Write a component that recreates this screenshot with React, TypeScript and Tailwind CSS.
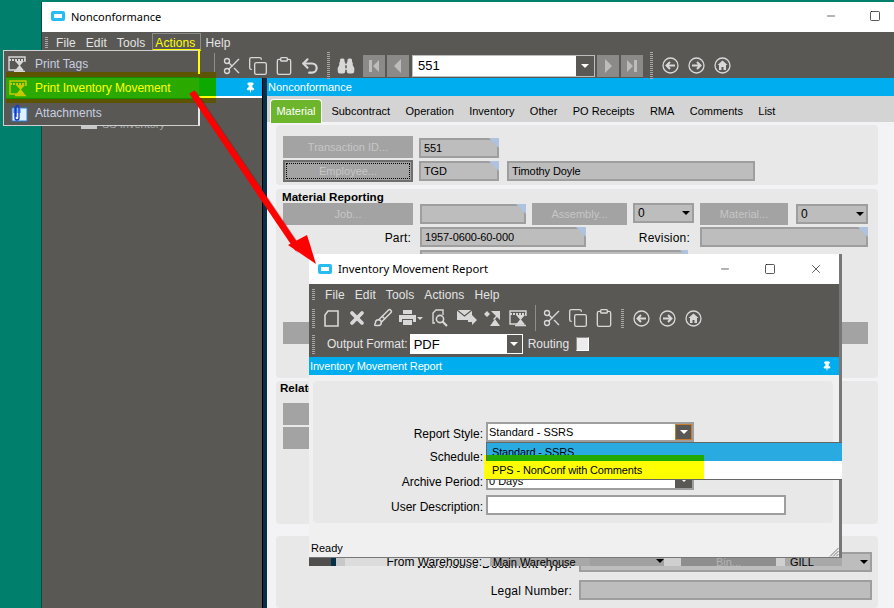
import React from 'react';
import { Binoculars, Brush, Clipboard, Copy, Minus, Pin, Scissors, Square, Undo2, X } from 'lucide-react';

const ink = '#d8d8d8';

function Grip({ h = 'h-[28px]' }: { h?: string }) {
  return <div className={`w-[3px] shrink-0 bg-[repeating-linear-gradient(to_bottom,#a8a8a8_0_1px,transparent_1px_2px)] ${h}`} />;
}

function HourglassIcon({ c = ink }: { c?: string }) {
  return (
    <svg width="20" height="17" viewBox="0 0 20 17" fill="none" className="shrink-0">
      <path d="M15 14H1V1h16v5" stroke={c} strokeWidth="1.4" />
      <path d="M1 4h16" stroke={c} strokeWidth="2" strokeDasharray="2 1" />
      <path d="M7 5h9l-4 4.5 4 5H7l4-5z" fill={c} />
      <path d="M6 15.5h11" stroke={c} strokeWidth="1.5" />
    </svg>
  );
}

function CircleGlyph({ dir }: { dir: 'left' | 'right' | 'home' }) {
  return (
    <svg width="17" height="17" viewBox="0 0 17 17" fill="none" className="shrink-0">
      <circle cx="8.5" cy="8.5" r="7.5" stroke={ink} strokeWidth="1.3" />
      {dir === 'left' && <path d="M13 8.5H5M8 5L4.5 8.5 8 12" stroke={ink} strokeWidth="2" />}
      {dir === 'right' && <path d="M4 8.5h8M9 5l3.5 3.5L9 12" stroke={ink} strokeWidth="2" />}
      {dir === 'home' && <path d="M8.5 3.5L13.5 8H12v5H9.5v-3h-2v3H5V8H3.5z" fill={ink} />}
    </svg>
  );
}

function NavButton({ kind }: { kind: 'first' | 'prev' | 'next' | 'last' }) {
  return (
    <div className="w-[22px] h-[22px] shrink-0 bg-[#8b8a88] flex items-center justify-center">
      <svg width="14" height="14" viewBox="0 0 14 14" fill="#bdbcba">
        {kind === 'first' && <path d="M2 1h3v12H2zM12 1v12L6 7z" />}
        {kind === 'prev' && <path d="M10 0v14L3 7z" />}
        {kind === 'next' && <path d="M4 0v14l7-7z" />}
        {kind === 'last' && <path d="M12 1H9v12h3zM2 1v12l6-6z" />}
      </svg>
    </div>
  );
}

function CaretBox({ className = '' }: { className?: string }) {
  return (
    <div className={`bg-[#595855] flex items-center justify-center shrink-0 ${className}`}>
      <div className="w-0 h-0 border-x-[4px] border-x-transparent border-t-[4px] border-t-white" />
    </div>
  );
}

function Field({ className = '', text = '', flag = false, children }: { className?: string; text?: string; flag?: boolean; children?: React.ReactNode }) {
  return (
    <div className={`relative shrink-0 h-[20px] bg-[#bdbdbd] border-2 border-[#9e9e9e] pl-[3px] flex justify-between text-black ${className || ''} items-center`}>
      <span className="whitespace-nowrap tracking-[-0.1px]">{text}</span>
      {children}
      {flag && <div className="absolute -top-[2px] -right-[2px] w-0 h-0 border-l-[10px] border-l-transparent border-t-[10px] border-t-[#adc3e0]" />}
    </div>
  );
}

function GraySelect({ className = '', text }: { className?: string; text: string }) {
  return (
    <Field className={className} text={text}>
      <div className="mr-[2px] w-0 h-0 border-x-[4px] border-x-transparent border-t-[4px] border-t-black" />
    </Field>
  );
}

function FormButton({ className = '', text = '' }: { className?: string; text?: string }) {
  return <div className={`shrink-0 h-[22px] bg-[#a3a3a3] text-[#c6c6c6] flex items-center justify-center whitespace-nowrap ${className}`}>{text}</div>;
}

function Group({ className = '', children }: { className?: string; children?: React.ReactNode }) {
  return <div className={`ml-[9px] w-[602px] bg-[#e8e8e8] rounded-[4px] pl-[7px] ${className}`}>{children}</div>;
}

function MainForm() {
  return (
    <div className="flex-1 flex flex-col bg-[#f3f3f5] overflow-hidden">
      <div className="h-[18px] shrink-0 bg-[#00adee] text-white pl-[1px] flex items-center">Nonconformance</div>
      <div className="h-[26px] shrink-0 bg-[#d4d4d4] flex items-end pl-[3px] gap-[15.4px] text-black">
        <div className="w-[52px] h-[24px] -mb-px bg-[#6cb52d] border border-b-0 border-white rounded-t-[4px] text-white flex items-center justify-center mr-[-6px]">Material</div>
        <span className="pb-[5px]">Subcontract</span>
        <span className="pb-[5px]">Operation</span>
        <span className="pb-[5px]">Inventory</span>
        <span className="pb-[5px]">Other</span>
        <span className="pb-[5px]">PO Receipts</span>
        <span className="pb-[5px]">RMA</span>
        <span className="pb-[5px]">Comments</span>
        <span className="pb-[5px]">List</span>
      </div>
      <Group className="mt-[3px] h-[60px] shrink-0 pt-[11px]">
        <div className="flex items-end gap-[6px]">
          <FormButton className="w-[130px]" text="Transaction ID..." />
          <Field className="w-[80px]" text="551" flag />
        </div>
        <div className="flex items-center gap-[6px] mt-[2px]">
          <div className="w-[130px] h-[22px] shrink-0 bg-[#a3a3a3] border-2 border-[#6e6e6e] p-px">
            <div className="w-full h-full border border-dotted border-black text-[#c6c6c6] flex items-center justify-center">Employee...</div>
          </div>
          <Field className="w-[80px]" text="TGD" flag />
          <Field className="w-[248px] ml-[2px]" text="Timothy Doyle" />
        </div>
      </Group>
      <Group className="mt-[4px] h-[189px] shrink-0 pt-[1px] flex flex-col">
        <div className="font-bold text-black h-[13px] leading-[13px] text-[11.6px] -ml-px">Material Reporting</div>
        <div className="flex items-start h-[23px]">
          <FormButton className="w-[130px]" text="Job..." />
          <Field className="w-[106px] ml-[7px] mt-px" flag />
          <FormButton className="w-[95px] ml-[6px]" text="Assembly..." />
          <GraySelect className="w-[61px] ml-[6px] text-[12px]" text="0" />
          <FormButton className="w-[88px] ml-[6px]" text="Material..." />
          <GraySelect className="w-[72px] ml-[8px] mt-px text-[12px]" text="0" />
        </div>
        <div className="flex items-center h-[20px] mt-px">
          <span className="w-[128px] text-right text-black shrink-0 text-[12px] tracking-[0.2px] pt-[2px]">Part:</span>
          <Field className="w-[166px] ml-[9px]" text="1957-0600-60-000" flag />
          <span className="w-[104px] text-right text-black shrink-0 text-[12px] tracking-[0.2px] pt-[2px]">Revision:</span>
          <Field className="w-[168px] ml-[10px]" flag />
        </div>
        <div className="relative w-[268px] h-[20px] ml-[137px] mt-[3px] bg-[#bdbdbd] border-2 border-[#9e9e9e] pl-[3px] text-black whitespace-nowrap leading-[12px]">
          SHU600, Sensor / Heating Plate Assembly
          <div className="absolute -top-[2px] -right-[2px] w-0 h-0 border-l-[8px] border-l-transparent border-t-[8px] border-t-[#adc3e0]" />
        </div>
        <div className="flex justify-between mt-[52px] pr-[10px]">
          <FormButton className="w-[130px]" />
          <FormButton className="w-[130px]" />
        </div>
      </Group>
      <Group className="mt-[3px] h-[143px] shrink-0 pt-[1px]">
        <div className="font-bold text-black h-[21px] text-[11.6px] -ml-[3px]">Related</div>
        <FormButton className="w-[130px]" />
        <FormButton className="w-[130px] mt-[2px]" />
      </Group>
      <Group className="mt-[12px] flex-1 pt-[16px]">
        <div className="flex justify-end items-end h-[20px] pr-[6px] gap-[7px] text-black">
          <span className="-translate-y-[2px] text-[12px] tracking-[0.2px]">Warehouse Document Type:</span>
          <GraySelect className="w-[293px]" text="" />
        </div>
        <div className="flex justify-end items-center h-[20px] mt-[8px] pr-[6px] gap-[7px] text-black">
          <span className="text-[12px] tracking-[0.2px] pt-[2px]">Legal Number:</span>
          <Field className="w-[293px]" />
        </div>
      </Group>
    </div>
  );
}

function MainWindow() {
  return (
    <div className="absolute left-[41px] top-[2px] right-0 bottom-0 flex flex-col border-l border-[#004d45] bg-white">
      <div className="h-[30px] shrink-0 flex items-center text-black font-['Noto_Sans',sans-serif] text-[11px] relative pb-[2px]">
        <div className="ml-[9px] w-[14px] h-[10px] rounded-[2px] border-[3px] border-[#29bdef] bg-white" />
        <span className="ml-[6px]">Nonconformance</span>
        <div className="ml-auto flex items-center gap-[32px] mr-[13px]">
          <Minus size={12} strokeWidth={1.2} color="#000" />
          <Square size={12} strokeWidth={1.3} color="#000" />
        </div>
      </div>
      <div className="h-[46px] shrink-0 bg-[#595855] text-[#e4e4e4] flex flex-col">
        <div className="h-[21px] flex items-center pl-[3px]">
          <Grip h="h-[11px]" />
          <div className="ml-[8px] flex gap-[10px] text-[12px] tracking-[0.1px]">
            <span>File</span>
            <span>Edit</span>
            <span>Tools</span>
            <span className="text-[#ffff00]">Actions</span>
            <span>Help</span>
          </div>
        </div>
        <div className="h-[25px] flex items-center pl-[172px] relative">
          <div className="w-px h-[25px] bg-[#8f8e8c] shrink-0" />
          <div className="flex items-center gap-[6px] ml-[7px]">
            <Scissors size={20} color={ink} strokeWidth={1.6} />
            <Copy size={20} color={ink} strokeWidth={1.6} />
            <Clipboard size={20} color={ink} strokeWidth={1.6} />
            <Undo2 size={20} color={ink} strokeWidth={2.6} />
          </div>
          <div className="ml-[7px]"><Grip /></div>
          <Binoculars size={18} color={ink} fill={ink} className="ml-[7px] shrink-0" />
          <div className="flex gap-[2px] ml-[8px]">
            <NavButton kind="first" />
            <NavButton kind="prev" />
          </div>
          <div className="ml-[3px] w-[183px] h-[22px] shrink-0 border border-[#bdbdbd] bg-white flex items-center justify-between text-black text-[13px] pl-[5px]">
            <span>551</span>
            <CaretBox className="w-[18px] h-full" />
          </div>
          <div className="flex gap-[2px] ml-[2px]">
            <NavButton kind="next" />
            <NavButton kind="last" />
          </div>
          <div className="ml-[7px]"><Grip /></div>
          <div className="flex gap-[9px] ml-[9px]">
            <CircleGlyph dir="left" />
            <CircleGlyph dir="right" />
            <CircleGlyph dir="home" />
          </div>
        </div>
      </div>
      <div className="flex-1 flex min-h-0">
        <div className="w-[220px] shrink-0 bg-[#595855] flex flex-col">
          <div className="h-[18px] bg-[#00adee] flex items-center justify-end pr-[6px]">
            <Pin size={11} color="#fff" fill="#fff" />
          </div>
          <div className="h-[2px] bg-white" />
          <div className="mt-[21px] ml-[39px] flex items-center text-[#a8a8a8] gap-[5px]">
            <div className="w-[16px] h-[8px] bg-[#c8c8c8]" />
            <span>SS Inventory</span>
          </div>
        </div>
        <div className="w-[5px] shrink-0 bg-[#06304a] border-l border-black" />
        <MainForm />
      </div>
    </div>
  );
}

function ActionsMenu() {
  return (
    <>
      <div className="absolute left-[152px] top-[33px] w-[49px] h-[18px] border border-[#8c8c8c] border-b-[2px] border-b-[#ffff00]" />
      <div className="absolute left-[3px] top-[50px] w-[197px] h-[76px] bg-[#595855] border border-[#cfcfcf] border-r-2 border-r-[#e8e8e8] flex flex-col text-[12px]">
        <div className="h-[25px] flex items-center pl-[4px] pt-px gap-[7px] text-[#c9cfe0]">
          <HourglassIcon />
          <span>Print Tags</span>
        </div>
        <div className="h-[22px] mt-px ml-[2px] -mr-px bg-[#2aaa00] border-y border-[#0f8f00] flex items-center pl-[3px] gap-[6px] text-[#ffff00] relative shadow-[0_-5px_0_#5c5400,0_4px_0_#5c5400]">
          <HourglassIcon c="#c8c800" />
          <span className="tracking-[-0.05px]">Print Inventory Movement</span>
        </div>
        <div className="flex-1 flex items-center pl-[5px] gap-[7px] text-[#c9cfe0] pt-[2px]">
          <svg width="19" height="18" viewBox="0 0 19 18" fill="none" className="shrink-0">
            <rect x="3" y="4" width="15" height="13" fill="#dff0ff" stroke="#2f7fd0" />
            <path d="M4 14V4h8v5H4" fill="#7ab8f0" />
            <path d="M6 3v11a2 2 0 004 0V3a1.5 1.5 0 00-3 0v10" stroke="#1438c8" strokeWidth="1.3" />
          </svg>
          <span>Attachments</span>
        </div>
      </div>
      <div className="absolute left-[199px] top-[72px] w-[17px] h-[31px] bg-[#5c5400]" />
      <div className="absolute left-[199px] top-[78px] w-[17px] h-[20px] bg-[#0aaa00] border-b-[2px] border-b-[#ffff00]" />
      <div className="absolute left-[198px] top-[50px] w-[2px] h-[24px] bg-[#ffff00]" />
    </>
  );
}

function ReportRow({ label, className = '', children }: { label: string; className?: string; children?: React.ReactNode }) {
  return (
    <div className={`flex items-center gap-[3px] ${className}`}>
      <span className="w-[170px] shrink-0 text-right text-black text-[12px] pt-[3px]">{label}</span>
      {children}
    </div>
  );
}

function InventoryDialog() {
  return (
    <div className="absolute left-[309px] top-[254px] w-[533px] h-[304px] flex flex-col bg-[#f0f0f0] border-r-[3px] border-b-[1px] border-[#777]">
      <div className="h-[30px] shrink-0 bg-white flex items-center text-black font-['Noto_Sans',sans-serif] text-[11.3px] pb-px">
        <div className="ml-[9px] w-[14px] h-[10px] rounded-[2px] border-[3px] border-[#29bdef] bg-white" />
        <span className="ml-[6px]">Inventory Movement Report</span>
        <div className="ml-auto flex items-center gap-[33px] mr-[16px]">
          <Minus size={12} strokeWidth={1.2} color="#000" />
          <Square size={12} strokeWidth={1.3} color="#000" />
          <X size={14} strokeWidth={1.1} color="#000" />
        </div>
      </div>
      <div className="h-[73px] shrink-0 bg-[#595855] text-[#e4e4e4] flex flex-col pl-[3px] text-[12px]">
        <div className="h-[21px] flex items-center">
          <Grip h="h-[11px]" />
          <div className="ml-[10px] flex gap-[10px] tracking-[0.1px]">
            <span>File</span>
            <span>Edit</span>
            <span>Tools</span>
            <span>Actions</span>
            <span>Help</span>
          </div>
        </div>
        <div className="h-[26px] flex items-center">
          <Grip h="h-[19px]" />
          <div className="ml-[6px] flex items-center gap-[6px]">
            <svg width="20" height="20" viewBox="0 0 20 20" fill="none" className="shrink-0">
              <path d="M7 3h10v15H4V7z" stroke={ink} strokeWidth="1.6" />
            </svg>
            <X size={20} color={ink} strokeWidth={4.5} />
            <Brush size={20} color={ink} strokeWidth={1.8} />
            <div className="flex items-center w-[22px]">
              <svg width="17" height="16" viewBox="0 0 17 16" fill={ink} className="shrink-0">
                <path d="M4 0h9v4H4zM0 5h17v7h-3V9H3v3H0zM4 10h9v5H4z" />
              </svg>
              <div className="ml-px w-0 h-0 border-x-[3px] border-x-transparent border-t-[3px] border-t-[#d8d8d8]" />
            </div>
            <svg width="16" height="18" viewBox="0 0 16 18" fill="none" className="shrink-0 ml-[5px]">
              <path d="M3 14H1V4l3-3h7v5" stroke={ink} strokeWidth="1.4" />
              <circle cx="8" cy="10" r="3.6" stroke={ink} strokeWidth="1.6" />
              <path d="M10.5 12.5L15 17" stroke={ink} strokeWidth="2.2" />
            </svg>
            <svg width="20" height="18" viewBox="0 0 20 18" fill="none" className="shrink-0 ml-[3px]">
              <path d="M0 1h15v10H0z" fill={ink} />
              <path d="M0 1l7.5 6L15 1" stroke="#595855" strokeWidth="1.2" />
              <path d="M11 9h4V6l5 5-5 5v-3h-4z" fill={ink} />
            </svg>
            <svg width="20" height="18" viewBox="0 0 20 18" fill={ink} className="shrink-0">
              <path d="M1 5l3-3 3 3-3 3zM8 2h9v9l-3-3-3 3-1-1 3-3z" />
              <path d="M7 17l5-7 5 7z" />
            </svg>
            <HourglassIcon />
          </div>
          <div className="w-px h-[26px] bg-[#8f8e8c] ml-[6px] shrink-0" />
          <div className="flex items-center gap-[6px] ml-[6px]">
            <Scissors size={20} color={ink} strokeWidth={1.6} />
            <Copy size={20} color={ink} strokeWidth={1.6} />
            <Clipboard size={20} color={ink} strokeWidth={1.6} />
          </div>
          <div className="ml-[7px]"><Grip h="h-[19px]" /></div>
          <div className="flex gap-[9px] ml-[9px]">
            <CircleGlyph dir="left" />
            <CircleGlyph dir="right" />
            <CircleGlyph dir="home" />
          </div>
        </div>
        <div className="h-[26px] flex items-center">
          <Grip h="h-[19px]" />
          <span className="ml-[12px]">Output Format:</span>
          <div className="ml-[2px] w-[113px] h-[20px] bg-white border border-white flex items-center justify-between text-black pl-[3px]">
            <span className="text-[13px]">PDF</span>
            <CaretBox className="w-[15px] h-full" />
          </div>
          <span className="ml-[5px]">Routing</span>
          <div className="ml-[7px] w-[13px] h-[14px] bg-[#ececec] border border-[#8f8e8c] border-r-white border-b-white" />
        </div>
      </div>
      <div className="h-[18px] shrink-0 bg-[#00adee] text-white flex items-center justify-between pl-[1px] pr-[7px]">
        <span className="tracking-[-0.15px]">Inventory Movement Report</span>
        <Pin size={10} color="#fff" fill="#fff" />
      </div>
      <div className="mt-[6px] ml-[4px] w-[520px] h-[142px] shrink-0 bg-[#e8e8e8] rounded-[4px] pt-[41px]">
        <ReportRow label="Report Style:">
          <div className="w-[208px] h-[20px] bg-white border-2 border-[#9e9e9e] flex items-center justify-between pl-px text-black">
            <span>Standard - SSRS</span>
            <CaretBox className="w-[17px] h-full border border-[#c77a2a]" />
          </div>
        </ReportRow>
        <ReportRow label="Schedule:" className="mt-[3px] h-[20px]" />
        <ReportRow label="Archive Period:" className="mt-[5px]">
          <div className="w-[208px] h-[20px] bg-white border-2 border-[#9e9e9e] flex items-end justify-between pl-px text-black leading-[14px]">
            <span>0 Days</span>
            <CaretBox className="w-[17px] h-full" />
          </div>
        </ReportRow>
        <ReportRow label="User Description:" className="mt-[5px]">
          <div className="w-[300px] h-[20px] bg-white border-2 border-[#9e9e9e]" />
        </ReportRow>
      </div>
      <div className="flex-1 flex items-end justify-between pl-[2px] pb-[3px] text-black relative">
        <span>Ready</span>
        <svg width="10" height="10" viewBox="0 0 10 10" className="absolute right-0 bottom-0" stroke="#777" strokeWidth="1" fill="none">
          <path d="M9.5 1L1 9.5M9.5 4L4 9.5M9.5 7L7 9.5" />
        </svg>
      </div>
    </div>
  );
}

function GlitchStrip() {
  return (
    <div className="absolute left-[309px] top-[558px] w-[533px] h-[8px] flex overflow-hidden text-black">
      <div className="w-[22px] bg-[#4f4e4c]" />
      <div className="w-[5px] bg-[#06304a]" />
      <div className="w-[9px] bg-[#c8c8c8]" />
      <div className="w-[145px] bg-[#dcdcdc] flex justify-end items-center pr-[8px] whitespace-nowrap leading-[8px] text-[12px]">From Warehouse:</div>
      <div className="w-[100px] bg-[#a8a8a8] flex items-center pl-[3px] whitespace-nowrap leading-[8px]">Main Warehouse</div>
      <div className="w-[74px] bg-[#a0a0a0] pl-[66px]">
        <div className="mt-[1px] w-0 h-0 border-x-[4px] border-x-transparent border-t-[4px] border-t-black" />
      </div>
      <div className="w-[17px] bg-[#cfcfcf]" />
      <div className="w-[95px] bg-[#8e8e8e] text-[#b4b4b4] text-center leading-[8px]">Bin...</div>
      <div className="w-[9px] bg-[#cfcfcf]" />
      <div className="flex-1 bg-[#a8a8a8] pl-[5px] leading-[8px]">GILL</div>
    </div>
  );
}

function ReportDropdown() {
  return (
    <div className="absolute left-[486px] top-[442px] w-[356px] h-[38px] bg-white border-y border-l border-[#666] text-black tracking-[-0.15px]">
      <div className="h-[18px] bg-[#29abe2] pl-[5px] leading-[18px]">Standard - SSRS</div>
      <div className="h-[18px] pl-[5px] leading-[18px] relative">
        <div className="absolute left-[-3px] top-0 w-[220px] h-[18px] bg-[#ffff00]" />
        <span className="relative">PPS - NonConf with Comments</span>
      </div>
      <div className="absolute left-0 top-[12px] w-[217px] h-[6px] bg-[#22aa00]" />
      <div className="absolute left-[-3px] top-[12px] w-[2px] h-[6px] bg-[#ffff00]" />
    </div>
  );
}

function RedArrow() {
  return (
    <svg width="894" height="608" viewBox="0 0 894 608" className="absolute left-0 top-0 pointer-events-none">
      <path d="M192 92L298 249" stroke="#000" strokeOpacity="0.18" strokeWidth="7" transform="translate(2 2)" />
      <path d="M192 92L298 249" stroke="#ff0000" strokeWidth="6.5" />
      <path d="M316 264L288 245L307 235z" fill="#ff0000" />
    </svg>
  );
}

export default function App() {
  return (
    <div className="relative w-[894px] h-[608px] overflow-hidden bg-[#007f6d] font-['Liberation_Sans',sans-serif] text-[11px] leading-none">
      <MainWindow />
      <ActionsMenu />
      <GlitchStrip />
      <InventoryDialog />
      <ReportDropdown />
      <RedArrow />
    </div>
  );
}
